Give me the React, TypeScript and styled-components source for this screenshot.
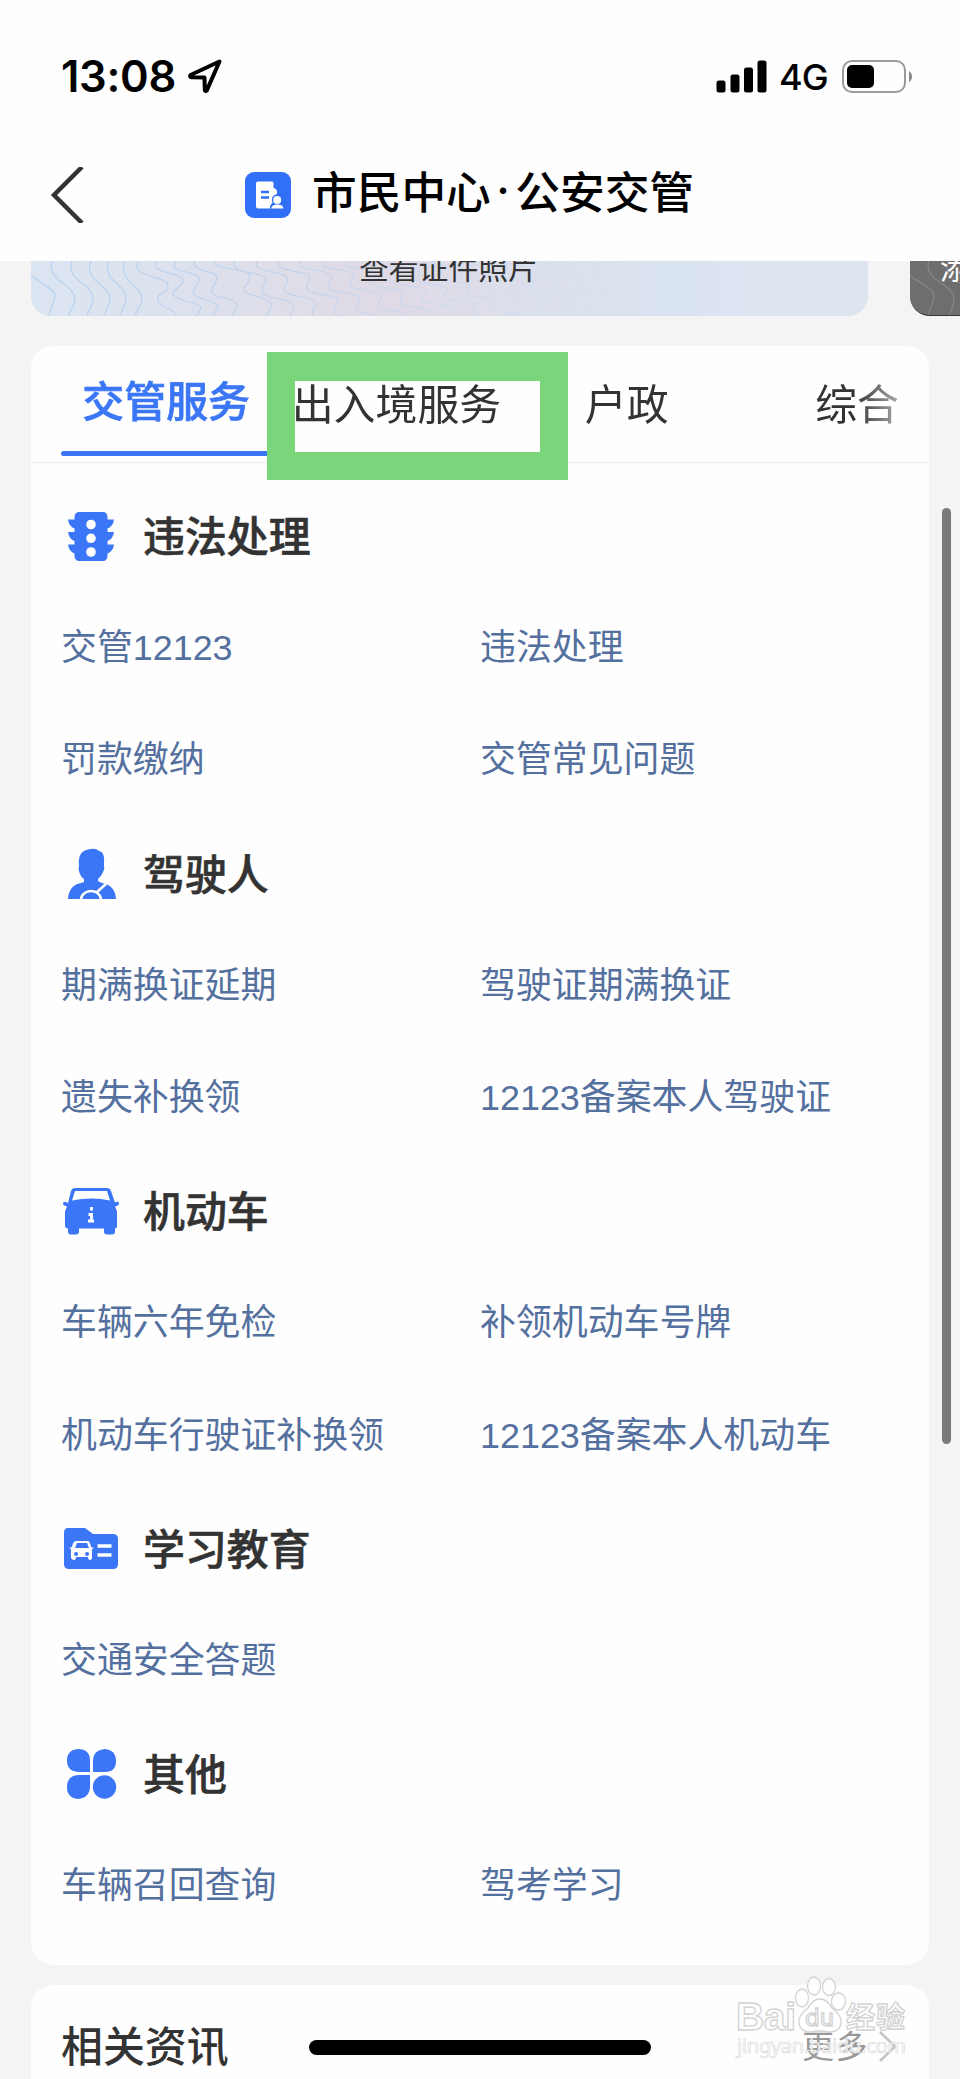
import React from 'react';
import styled, { createGlobalStyle, css } from 'styled-components';

const CJK = `"Noto Sans CJK SC", sans-serif`;
const BLUE = '#3a76f6';

const GlobalStyle = createGlobalStyle`
  * { box-sizing: border-box; }
  html, body { margin: 0; padding: 0; background: #f4f4f4; }
  body { font-family: "Liberation Sans", ${CJK}; color: #333; }
  svg { display: block; flex: none; }
`;

const Screen = styled.div`
  position: relative;
  width: 960px;
  height: 2079px;
  overflow: hidden;
  background: #f4f4f4;
`;

const TopArea = styled.header`
  height: 261px;
  background: #fefefe;
`;

const StatusBar = styled.div`
  display: flex;
  align-items: center;
  height: 152px;
  padding: 0 48px 0 61px;
  color: #000;
  font-family: Inter, sans-serif;
`;

const Time = styled.span`
  font-size: 43.5px;
  font-weight: 600;
  letter-spacing: -0.3px;
  width: 127px;
`;

const StatusRight = styled.div`
  display: flex;
  align-items: center;
  margin-left: auto;
`;

const Network = styled.span`
  font-size: 36px;
  font-weight: 500;
  width: 63px;
  margin-left: 12px;
  letter-spacing: -0.8px;
  line-height: 40px;
  padding-top: 1px;
`;

const NavBar = styled.nav`
  display: flex;
  align-items: center;
  height: 86px;
  padding-left: 50px;
`;

const AppIcon = styled.span`
  width: 46px;
  height: 46px;
  margin-left: 161px;
  border-radius: 9px;
  background: #316ff6;
`;

const Title = styled.h1`
  display: flex;
  margin: 0 0 10px 21px;
  font: 500 44.7px/60px ${CJK};
  color: #000;
  white-space: nowrap;
`;

const Dot = styled.span`
  width: 24.5px;
  text-align: center;
  font-family: Inter, sans-serif;
`;

const CardStrip = styled.div`
  display: flex;
  gap: 42px;
  height: 55px;
  padding-left: 31px;
  overflow: hidden;
`;

const LicenseCard = styled.div<{ $dark?: boolean }>`
  position: relative;
  flex: none;
  width: 837px;
  height: 55px;
  overflow: hidden;
  border-radius: 0 0 20px 20px;
  background: linear-gradient(90deg, #dbe5f1 0%, #dce1ed 18%, #dfdae5 42%, #dcdfeb 58%, #dae4f0 76%, #dde4f0 100%);
  ${(p) => p.$dark && css`
    background: #6e6e6e;
    color: #fff;
    border-bottom: 1px solid #333;
  `}
`;

const CardLabel = styled.div<{ $left: number }>`
  position: relative;
  margin: -15px 0 0 ${(p) => p.$left}px;
  font: 400 29.8px/40px ${CJK};
  white-space: nowrap;
`;

const Waves = styled.svg`
  position: absolute;
  inset: 0;
`;

const Panel = styled.section`
  width: 898px;
  margin: 30px 0 0 31px;
  height: 1619px;
  border-radius: 22px;
  background: #fefefe;
`;

const Tabs = styled.div`
  display: flex;
  height: 117px;
  padding-left: 20px;
  border-bottom: 1px solid #ebebeb;
`;

const TabList = styled.div`
  display: flex;
  width: 878px;
  overflow: hidden;
  mask-image: linear-gradient(90deg, #000 804px, transparent 878px);
`;

const Tab = styled.button<{ $active?: boolean }>`
  display: flex;
  flex-direction: column;
  justify-content: space-between;
  flex: none;
  width: 230.3px;
  padding: ${(p) => (p.$active ? '23px' : '26px')} 10px 6px;
  border: 0;
  background: none;
  color: ${(p) => (p.$active ? BLUE : '#333')};
  font: ${(p) => (p.$active ? 500 : 400)} 41.9px/60px ${CJK};
  -webkit-text-stroke: ${(p) => (p.$active ? '0.7px' : '0')};
  text-align: center;
  white-space: nowrap;
  align-items: center;
`;

const Underline = styled.span`
  width: 100%;
  height: 5px;
  border-radius: 3px;
  background: ${BLUE};
`;

const SectionHead = styled.h2`
  display: flex;
  align-items: center;
  height: 112.6px;
  margin: 0;
  padding: 5px 0 0 30px;
  font: 500 41.9px/60px ${CJK};
  color: #333;
`;

const HeadText = styled.span`
  margin-bottom: 4px;
  -webkit-text-stroke: 0.6px;
`;

const IconBox = styled.span`
  width: 60px;
  margin-right: 22px;
  display: flex;
  justify-content: center;
`;

const Sections = styled.div`
  padding-top: 14px;
`;

const LinkGrid = styled.div`
  display: grid;
  grid-template-columns: 419px 1fr;
  grid-auto-rows: 112.6px;
  align-items: center;
  padding-left: 30px;
`;

const ServiceLink = styled.a`
  padding-top: 4px;
  font: 400 35.9px/50px "Liberation Sans", ${CJK};
  color: #54709f;
  white-space: nowrap;
`;

const NewsPanel = styled.section`
  display: flex;
  align-items: center;
  width: 898px;
  height: 122px;
  margin: 20px 0 0 31px;
  padding: 0 32px 0 30px;
  border-radius: 22px 22px 0 0;
  background: #fefefe;
`;

const NewsTitle = styled.h2`
  flex: 1;
  margin: 0 0 5px;
  font: 500 41.9px/60px ${CJK};
`;

const More = styled.span`
  margin: 0 10px 4px 0;
  font: 400 32px/50px ${CJK};
  letter-spacing: 1.5px;
  color: #999;
`;

const HighlightFrame = styled.div`
  position: absolute;
  left: 267px;
  top: 352px;
  width: 301px;
  height: 128px;
  border: 28px solid #7bd57a;
  border-top-width: 29px;
`;

const Scrollbar = styled.div`
  position: absolute;
  left: 942px;
  top: 508px;
  width: 9px;
  height: 936px;
  border-radius: 5px;
  background: #7a7a7a;
`;

const HomeIndicator = styled.div`
  position: absolute;
  left: 309px;
  top: 2040px;
  width: 342px;
  height: 15px;
  border-radius: 8px;
  background: #000;
`;

const Watermark = styled.svg`
  position: absolute;
  left: 730px;
  top: 1970px;
`;

const LEFT_WAVES = [
  'M0 14C8 22 24 28 24 34S20 46 18 55',
  'M21 0C14 18 44 24 44 38C44 44 40 48 37 55',
  'M41 0C34 20 62 22 62 38C62 44 58 48 56 55',
  'M60 0C52 20 79 24 79 38C79 44 75 48 73 55',
  'M78 0C70 20 95 22 95 38C95 44 91 48 89 55',
  'M94 0C86 20 111 24 111 38C111 44 106 48 104 55',
  'M108 0C96 17 138 14 137 25C136 34 116 34 134 46Q144 50 145 55',
  'M126 0C116 14 154 10 152 21C150 28 130 32 154 40C174 45 172 46 165 55',
  'M145 0C134 14 172 8 168 20C165 28 154 32 172 38C192 43 188 46 181 55',
  'M164 0C158 12 188 8 186 18C184 26 172 32 190 36C212 41 208 46 200 55',
  'M184 0C180 10 222 6 219 17C217 26 204 30 224 35C246 40 242 46 234 55',
];

function stairWave(x: number, w: number, h: number): string {
  let d = `M${x} -4`;
  for (let i = 0; i < 5; i += 1) {
    d += `c${-0.25 * w} ${0.45 * h} 0 ${0.5 * h} ${0.45 * w} ${0.6 * h}`;
    d += `s${0.65 * w} ${0.15 * h} ${0.55 * w} ${0.4 * h}`;
  }
  return d;
}

const STAIR_WAVES = Array.from({ length: 17 }, (_, i) => stairWave(206 + i * 22, 28, Math.max(13, 26 - i * 1.3)));

function CardWaves() {
  return (
    <Waves width="837" height="55" viewBox="0 0 837 55" fill="none" strokeWidth="1.2">
      <defs>
        <linearGradient id="waveFade" gradientUnits="userSpaceOnUse" x1="0" y1="0" x2="650" y2="0">
          <stop offset="0" stopColor="#b4d1f2" />
          <stop offset=".4" stopColor="#c3d3eb" />
          <stop offset=".75" stopColor="#cfdcee" stopOpacity=".8" />
          <stop offset="1" stopColor="#d6e4f2" stopOpacity="0" />
        </linearGradient>
      </defs>
      {[...LEFT_WAVES, ...STAIR_WAVES].map((d) => (
        <path key={d} d={d} stroke="url(#waveFade)" />
      ))}
    </Waves>
  );
}

const TrafficLightIcon = () => (
  <svg width="56" height="52" viewBox="0 0 56 52" fill={BLUE}>
    <path d="M16 2h24q4 0 4.500 5v2.500h6.500q-1 7-6.500 9V22h6.500q-1 7-6.500 9v3.500h6.500q-1 7-6.500 9V46q-.5 5-4.500 5H16q-4 0-4.500-5v-2.500q-5.500-2-6.500-9h6.500V31Q6 29 5 22h6.500v-3.500Q6 16.500 5 9.500h6.500V7q.5-5 4.500-5z" />
    <g fill="#fff">
      <circle cx="28" cy="14.500" r="4.800" />
      <circle cx="28" cy="28.300" r="4.800" />
      <circle cx="28" cy="42" r="4.800" />
    </g>
  </svg>
);

const DriverIcon = () => (
  <svg width="56" height="56" viewBox="0 0 56 56">
    <path d="M28 3q5-1 8 2 6 1 5 11v4q1 2-1 6-2 5-5 7v2l4 2q13 2 14 16H5q1-14 13-16l3-1v-3q-4-3-5-8-1-3 0-5Q14 4 28 3z" fill={BLUE} />
    <g fill="none" stroke="#fff" strokeWidth="2.600">
      <path d="M18 54a10 9 0 0 1 20 0M34 46l9-8" />
    </g>
  </svg>
);

const CarIcon = () => (
  <svg width="60" height="50" viewBox="0 0 60 50">
    <path
      fillRule="evenodd"
      fill={BLUE}
      d="M14 2h32q3 0 4 3l4 11.500 2-1q2 0 2 2 0 2-4 3l2 5v15q0 2-2 2v3q0 3-3 3h-5q-3 0-3-3v-3H18v3q0 3-3 3h-5q-3 0-3-3v-3q-3 0-3-3V25.500l2-5q-4-1-4-3 0-3 4-1l1 .500L10 5q1-3 4-3zm0 3-3 9.500q20-4 38 0L46 5z"
    />
    <path d="M30.500 21v3.500M27.500 28.500h3V35M27 35h6" fill="none" stroke="#fff" strokeWidth="2.800" />
  </svg>
);

const FolderIcon = () => (
  <svg width="58" height="46" viewBox="0 0 58 46">
    <path d="M6 2h17l8 6h20q5 0 5 5v25q0 5-5 5H7q-5 0-5-5V7q0-5 4-5z" fill={BLUE} />
    <path
      fillRule="evenodd"
      fill="#fff"
      d="M14 15h12q2 0 3 6l3 1-2 1v9q0 2-2 2t-2-3H14q0 3-2 3t-3-2v-9l-2-1 3-1q1-6 4-6zm1 2-2 5h14l-2-5zM14 26a2 2 0 1 0 .1 0zM25 26a2 2 0 1 0 .1 0z"
    />
    <path d="M35.500 20h14M35.500 29h14" stroke="#fff" strokeWidth="3.400" />
  </svg>
);

const PetalsIcon = () => (
  <svg width="56" height="56" viewBox="0 0 56 56" fill={BLUE}>
    <path d="M15 3q12 0 12 12v11H15Q4 25 4 14.500T15 3zM42 3q11 1 11 12T42 26H30V15Q30 4 42 3zM15 29h12v11q0 12-12 13Q4 52 4 41t11-12z" />
    <circle cx="41.500" cy="41" r="11.700" />
  </svg>
);

const SECTIONS = [
  { title: '违法处理', Icon: TrafficLightIcon, links: ['交管12123', '违法处理', '罚款缴纳', '交管常见问题'] },
  { title: '驾驶人', Icon: DriverIcon, links: ['期满换证延期', '驾驶证期满换证', '遗失补换领', '12123备案本人驾驶证'] },
  { title: '机动车', Icon: CarIcon, links: ['车辆六年免检', '补领机动车号牌', '机动车行驶证补换领', '12123备案本人机动车'] },
  { title: '学习教育', Icon: FolderIcon, links: ['交通安全答题'] },
  { title: '其他', Icon: PetalsIcon, links: ['车辆召回查询', '驾考学习'] },
];

export default function App() {
  return (
    <Screen>
      <GlobalStyle />
      <TopArea>
        <StatusBar>
          <Time>13:08</Time>
          <svg width="35" height="36" viewBox="0 0 35 36" fill="none" stroke="#000" strokeWidth="4" strokeLinejoin="round">
            <path d="M31.500 3.500 2.500 17q-1 2 1 2.200l13 .3.300 12.500q.500 2 2 .400z" />
          </svg>
          <StatusRight>
            <svg width="51" height="33" viewBox="0 0 51 33">
              <rect x=".5" y="20.500" width="9" height="12" rx="2.500" />
              <rect x="14.500" y="14.500" width="9" height="18" rx="2.500" />
              <rect x="28" y="7.500" width="9" height="25" rx="2.500" />
              <rect x="41.500" y=".5" width="9" height="32" rx="2.500" />
            </svg>
            <Network>4G</Network>
            <svg width="70" height="33" viewBox="0 0 70 33">
              <rect x="1" y="1" width="62" height="31" rx="9" fill="none" stroke="#9b9b9b" strokeWidth="2" />
              <rect x="5" y="5" width="27" height="23" rx="5" />
              <path d="M67 11q3 1.500 3 5.500t-3 5.500z" fill="#8a8a8a" />
            </svg>
          </StatusRight>
        </StatusBar>
        <NavBar>
          <svg width="34" height="56" viewBox="0 0 34 56" fill="none" stroke="#333" strokeWidth="4.500">
            <path d="M32 0 4 28l28 28" />
          </svg>
          <AppIcon>
            <svg width="46" height="46" viewBox="0 0 46 46">
              <path d="M13 9.500h14q1.500 0 1.500 2V16q3.500 1 3.500 3.500V22q-7 2-4.500 9-3 2-2.500 5.500H13q-2 0-2-2v-23q0-2 2-2z" fill="#fff" />
              <path d="M16 20h8M16 25.500h8" stroke="#316ff6" strokeWidth="2.400" />
              <circle cx="32.200" cy="28" r="4" fill="#fff" />
              <path d="M26 36.500q1-4 6.500-4t6 4z" fill="#fff" />
            </svg>
          </AppIcon>
          <Title>
            市民中心<Dot>·</Dot>公安交管
          </Title>
        </NavBar>
      </TopArea>

      <CardStrip>
        <LicenseCard>
          <CardWaves />
          <CardLabel $left={328}>查看证件照片</CardLabel>
        </LicenseCard>
        <LicenseCard $dark>
          <Waves width="50" height="55" viewBox="0 0 50 55" fill="none" stroke="#858585" strokeWidth="1.300">
            <path d="M0 15C10 22 24 28 24 35S20 46 18 55M19 0C12 20 44 22 44 38Q44 44 39 55M38 0Q34 16 50 22" />
          </Waves>
          <CardLabel $left={30}>添加</CardLabel>
        </LicenseCard>
      </CardStrip>

      <Panel>
        <Tabs>
          <TabList>
            <Tab $active>
              交管服务
              <Underline />
            </Tab>
            <Tab>出入境服务</Tab>
            <Tab>户政</Tab>
            <Tab>综合</Tab>
          </TabList>
        </Tabs>
        <Sections>
          {SECTIONS.map(({ title, Icon, links }) => (
            <div key={title}>
              <SectionHead>
                <IconBox>
                  <Icon />
                </IconBox>
                <HeadText>{title}</HeadText>
              </SectionHead>
              <LinkGrid>
                {links.map((link) => (
                  <ServiceLink key={link}>{link}</ServiceLink>
                ))}
              </LinkGrid>
            </div>
          ))}
        </Sections>
      </Panel>

      <NewsPanel>
        <NewsTitle>相关资讯</NewsTitle>
        <More>更多</More>
        <svg width="18" height="31" viewBox="0 0 18 31" fill="none" stroke="#c4c4c4" strokeWidth="2.600">
          <path d="M1 1l15 14.500L1 30" />
        </svg>
      </NewsPanel>

      <HighlightFrame />
      <Scrollbar />
      <HomeIndicator />
      <Watermark width="190" height="100" viewBox="0 0 190 100" fill="#fff" fillOpacity=".75" stroke="#d2d2d2" strokeWidth="1.300">
        <text x="6" y="60" fontFamily="Liberation Sans" fontWeight="700" fontSize="39" textLength="60">Bai</text>
        <ellipse cx="72" cy="28" rx="6.500" ry="9" />
        <ellipse cx="84" cy="16" rx="6.500" ry="9" />
        <ellipse cx="99" cy="17" rx="6.500" ry="8.500" />
        <ellipse cx="108.500" cy="31.500" rx="7" ry="8.500" />
        <path d="M90 29q7 0 12 9 9 7 9 13 0 11-12 11-9-2-18 0-12 0-12-11 0-6 9-13 5-9 12-9z" />
        <text x="75" y="56" fontFamily="Inter" fontSize="24" textLength="29">du</text>
        <text x="116" y="58" fontFamily="Noto Sans CJK SC" fontWeight="700" fontSize="29" textLength="59">经验</text>
        <text x="7" y="83" fontFamily="Noto Sans" fontSize="20" strokeWidth=".7" stroke="#dadada" textLength="169">jingyan.baidu.com</text>
      </Watermark>
    </Screen>
  );
}
